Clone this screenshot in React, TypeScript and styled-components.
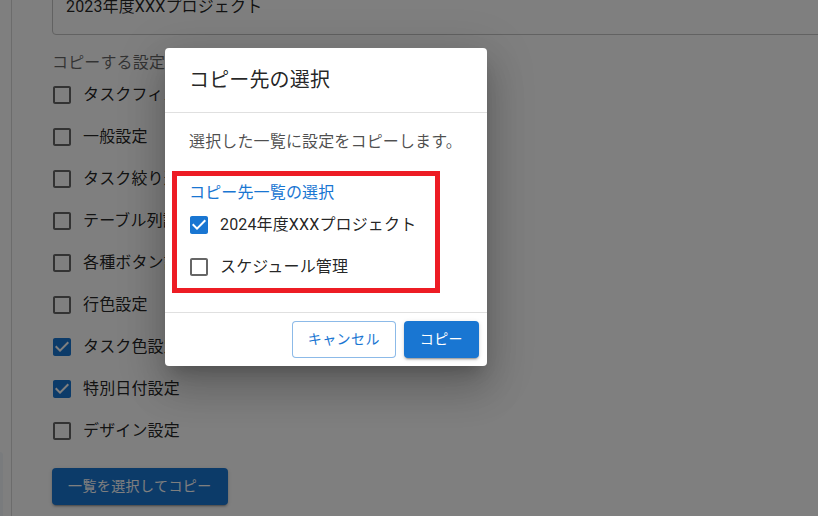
import React from "react";
import styled, { createGlobalStyle } from "styled-components";

const Global = createGlobalStyle`
  html, body { margin: 0; height: 100%; overflow: hidden; background: #fff; }
  body { font-family: Roboto, "Noto Sans CJK JP", sans-serif; color: rgba(0,0,0,.87); letter-spacing: .00938em; }
`;

const Page = styled.div`
  position: relative;
  display: flex;
  width: 818px;
  height: 516px;
  overflow: hidden;
`;

const Rail = styled.aside`
  position: relative;
  flex: 0 0 12px;
  box-sizing: border-box;
  border-right: 1px solid #d8d8d8;
`;

const RailTab = styled.div`
  position: absolute;
  left: 0;
  top: 452px;
  width: 3px;
  height: 64px;
  background: #f3f7fb;
  border-top-right-radius: 3px;
`;

const Form = styled.main`
  flex: 1;
  min-width: 0;
  margin-top: -22px;
  padding-left: 40px;
  display: flex;
  flex-direction: column;
  align-items: flex-start;
`;

const NameField = styled.div`
  box-sizing: border-box;
  width: 800px;
  height: 57px;
  border: 1px solid #c4c4c4;
  border-radius: 4px;
  padding: 0 0 3px 13px;
  display: flex;
  align-items: center;
  font-size: 16px;
`;

const SectionLabel = styled.div`
  margin-top: 16px;
  height: 24px;
  line-height: 24px;
  font-size: 16px;
  color: rgba(0,0,0,.6);
`;

const CheckList = styled.div`
  display: flex;
  flex-direction: column;
  margin-left: -2px;
  margin-top: -1px;
`;

const CheckRow = styled.label`
  display: flex;
  align-items: center;
  height: 42px;
  font-size: 16px;
  line-height: 24px;
  white-space: nowrap;
`;

const BoxWrap = styled.span`
  flex: 0 0 24px;
  width: 24px;
  height: 24px;
  margin-right: 9px;
  color: rgba(0,0,0,.6);
  svg { display: block; width: 24px; height: 24px; fill: currentColor; }
  &[data-checked="true"] { color: #1976d2; }
`;

const PrimaryButton = styled.button`
  box-sizing: border-box;
  height: 37px;
  padding: 0 16px 2px;
  border: 0;
  border-radius: 4px;
  background: #1976d2;
  color: #fff;
  font: 400 14px/1 Roboto, "Noto Sans CJK JP", sans-serif;
  letter-spacing: .4px;
  box-shadow: 0 3px 1px -2px rgba(0,0,0,.2), 0 2px 2px 0 rgba(0,0,0,.14), 0 1px 5px 0 rgba(0,0,0,.12);
`;

const OutlineButton = styled(PrimaryButton)`
  background: #fff;
  color: #1976d2;
  border: 1px solid rgba(25,118,210,.5);
  box-shadow: none;
  padding: 0 15px 2px;
`;

const CopyAllButton = styled(PrimaryButton)`
  margin-top: 16px;
`;

const Overlay = styled.div`
  position: absolute;
  inset: 0;
  background: rgba(0,0,0,.5);
  padding: 48px 0 0 165px;
`;

const Dialog = styled.section`
  position: relative;
  box-sizing: border-box;
  width: 322px;
  height: 318px;
  background: #fff;
  border-radius: 4px;
  display: flex;
  flex-direction: column;
  box-shadow: 0 11px 15px -7px rgba(0,0,0,.2), 0 24px 38px 3px rgba(0,0,0,.14), 0 9px 46px 8px rgba(0,0,0,.12);
`;

const DialogTitle = styled.h2`
  margin: 0;
  box-sizing: border-box;
  height: 65px;
  padding: 0 24px 3px;
  display: flex;
  align-items: center;
  font-size: 20px;
  font-weight: 400;
  letter-spacing: .0075em;
  border-bottom: 1px solid #e0e0e0;
`;

const DialogBody = styled.div`
  flex: 1;
  padding: 15px 24px 0;
`;

const Lead = styled.p`
  margin: 0;
  height: 28px;
  line-height: 28px;
  font-size: 16px;
  color: rgba(0,0,0,.7);
`;

const PickerLabel = styled.div`
  margin-top: 25px;
  height: 24px;
  line-height: 24px;
  font-size: 16px;
  color: #1976d2;
`;

const DialogFooter = styled.footer`
  box-sizing: border-box;
  height: 54px;
  padding: 8px;
  border-top: 1px solid #e0e0e0;
  display: flex;
  justify-content: flex-end;
  align-items: flex-start;
  gap: 8px;
`;

const Highlight = styled.div`
  position: absolute;
  left: 7px;
  top: 123px;
  width: 268px;
  height: 122px;
  box-sizing: border-box;
  border: 5px solid #ed1c24;
  pointer-events: none;
`;

const Check = ({ checked, label }: { checked?: boolean; label: string }) => (
  <CheckRow>
    <BoxWrap data-checked={checked ? "true" : "false"}>
      <svg viewBox="0 0 24 24" aria-hidden="true">
        {checked ? (
          <path d="M19 3H5c-1.11 0-2 .9-2 2v14c0 1.1.89 2 2 2h14c1.11 0 2-.9 2-2V5c0-1.1-.89-2-2-2zm-9 14l-5-5 1.41-1.41L10 14.17l7.59-7.59L19 8l-9 9z" />
        ) : (
          <path d="M19 5v14H5V5h14m0-2H5c-1.1 0-2 .9-2 2v14c0 1.1.9 2 2 2h14c1.1 0 2-.9 2-2V5c0-1.1-.9-2-2-2z" />
        )}
      </svg>
    </BoxWrap>
    {label}
  </CheckRow>
);

const settings: [string, boolean][] = [
  ["タスクフィルタ設定", false],
  ["一般設定", false],
  ["タスク絞り込み設定", false],
  ["テーブル列設定", false],
  ["各種ボタン設定", false],
  ["行色設定", false],
  ["タスク色設定", true],
  ["特別日付設定", true],
  ["デザイン設定", false],
];

export default function App() {
  return (
    <Page>
      <Global />
      <Rail>
        <RailTab />
      </Rail>
      <Form>
        <NameField>2023年度XXXプロジェクト</NameField>
        <SectionLabel>コピーする設定</SectionLabel>
        <CheckList>
          {settings.map(([label, checked]) => (
            <Check key={label} label={label} checked={checked} />
          ))}
        </CheckList>
        <CopyAllButton>一覧を選択してコピー</CopyAllButton>
      </Form>
      <Overlay>
        <Dialog>
          <DialogTitle>コピー先の選択</DialogTitle>
          <DialogBody>
            <Lead>選択した一覧に設定をコピーします。</Lead>
            <PickerLabel>コピー先一覧の選択</PickerLabel>
            <CheckList>
              <Check label="2024年度XXXプロジェクト" checked />
              <Check label="スケジュール管理" />
            </CheckList>
          </DialogBody>
          <DialogFooter>
            <OutlineButton>キャンセル</OutlineButton>
            <PrimaryButton>コピー</PrimaryButton>
          </DialogFooter>
          <Highlight />
        </Dialog>
      </Overlay>
    </Page>
  );
}
